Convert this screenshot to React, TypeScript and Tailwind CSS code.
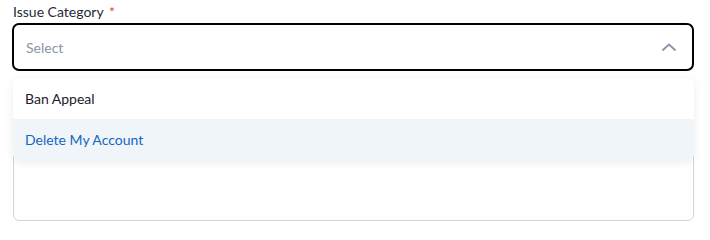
import { useState } from "react";

const options = ["Ban Appeal", "Delete My Account"];

function ChevronUp() {
  return (
    <svg width="14" height="8" viewBox="0 0 14 8" fill="none" className="shrink-0">
      <path d="M1 7L7 1.5L13 7" stroke="#8a94a6" strokeWidth="1.8" strokeLinecap="round" strokeLinejoin="round" />
    </svg>
  );
}

export default function App() {
  const [hovered] = useState(1);

  return (
    <div className="w-[710px] h-[227px] bg-white font-['Lato','Liberation_Sans',sans-serif]">
      <div className="ml-3 w-[682px] pt-[2px]">
        <label className="block h-5 text-[14px] leading-5 text-[#1f2937] pl-[1px]">
          Issue Category <span className="text-[#e53e3e] ml-[2px]">*</span>
        </label>
        <div className="relative mt-[1px]">
          <button
            type="button"
            className="flex h-12 w-full items-center justify-between rounded-[7px] border-2 border-black bg-white pl-3 pr-[16px] text-left"
          >
            <span className="text-[14px] text-[#8a94a6]">Select</span>
            <ChevronUp />
          </button>

          <div className="absolute left-[1px] right-0 top-[55px] z-10 overflow-hidden rounded-[6px] bg-white shadow-[0_2px_10px_rgba(0,0,0,0.08)]">
            {options.map((o, i) => (
              <div
                key={o}
                className={
                  i === hovered
                    ? "flex h-[41px] items-center bg-[#f0f5fa] px-3 text-[14px] text-[#1565c0]"
                    : "flex h-[41px] items-center px-3 text-[14px] text-[#1a202c]"
                }
              >
                {o}
              </div>
            ))}
          </div>

          <textarea className="mt-4 ml-[1px] block h-[134px] w-[681px] resize-none rounded-[6px] border border-[#d0d5dd] bg-white" />
        </div>
      </div>
    </div>
  );
}
